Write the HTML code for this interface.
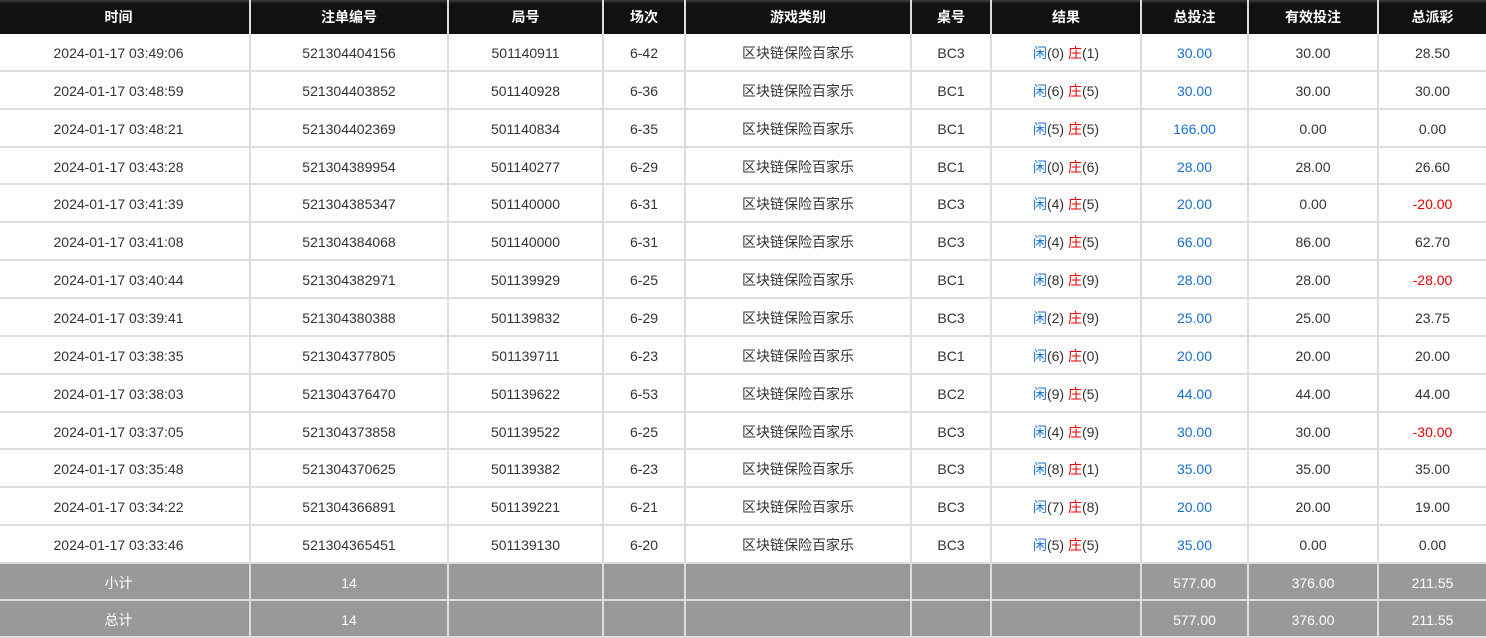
<!DOCTYPE html>
<html><head><meta charset="utf-8"><style>
*{margin:0;padding:0;box-sizing:border-box}
body{width:1486px;height:637px;overflow:hidden;background:#fff;font-family:"Liberation Sans","Noto Sans CJK SC",sans-serif;font-size:14px;color:#333}
.r{display:flex;height:37.86px}
.r div{border-right:2px solid #ddd;border-bottom:2px solid #ddd;display:flex;align-items:center;justify-content:center;white-space:nowrap;padding-top:2px}
.r div:last-child{border-right:none}
.h{height:34px;background:linear-gradient(#3a3a3a 0,#111 4px,#111 100%);color:#fff;font-weight:bold}
.h div{border-color:#ddd;border-bottom:none;padding-top:0}
.s{background:#999;color:#fff;height:37px}
.s div{border-color:#ddd}
.b{color:#1a6fd1}.rd{color:#e00}
.c0{width:251px;padding-right:12px}.c1{width:198px}.c2{width:155px}.c3{width:82px}.c4{width:226px}.c5{width:80px}.c6{width:150px}.c7{width:107px}.c8{width:130px}.c9{width:107px}
</style></head><body>
<div class="r h"><div class="c0">时间</div><div class="c1">注单编号</div><div class="c2">局号</div><div class="c3">场次</div><div class="c4">游戏类别</div><div class="c5">桌号</div><div class="c6">结果</div><div class="c7">总投注</div><div class="c8">有效投注</div><div class="c9">总派彩</div></div>
<div id="rows"></div>
<script>
var d=[
["2024-01-17 03:49:06","521304404156","501140911","6-42","BC3",0,1,"30.00","30.00","28.50"],
["2024-01-17 03:48:59","521304403852","501140928","6-36","BC1",6,5,"30.00","30.00","30.00"],
["2024-01-17 03:48:21","521304402369","501140834","6-35","BC1",5,5,"166.00","0.00","0.00"],
["2024-01-17 03:43:28","521304389954","501140277","6-29","BC1",0,6,"28.00","28.00","26.60"],
["2024-01-17 03:41:39","521304385347","501140000","6-31","BC3",4,5,"20.00","0.00","-20.00"],
["2024-01-17 03:41:08","521304384068","501140000","6-31","BC3",4,5,"66.00","86.00","62.70"],
["2024-01-17 03:40:44","521304382971","501139929","6-25","BC1",8,9,"28.00","28.00","-28.00"],
["2024-01-17 03:39:41","521304380388","501139832","6-29","BC3",2,9,"25.00","25.00","23.75"],
["2024-01-17 03:38:35","521304377805","501139711","6-23","BC1",6,0,"20.00","20.00","20.00"],
["2024-01-17 03:38:03","521304376470","501139622","6-53","BC2",9,5,"44.00","44.00","44.00"],
["2024-01-17 03:37:05","521304373858","501139522","6-25","BC3",4,9,"30.00","30.00","-30.00"],
["2024-01-17 03:35:48","521304370625","501139382","6-23","BC3",8,1,"35.00","35.00","35.00"],
["2024-01-17 03:34:22","521304366891","501139221","6-21","BC3",7,8,"20.00","20.00","19.00"],
["2024-01-17 03:33:46","521304365451","501139130","6-20","BC3",5,5,"35.00","0.00","0.00"]];
var h="";
d.forEach(function(x){h+='<div class="r"><div class="c0">'+x[0]+'</div><div class="c1">'+x[1]+'</div><div class="c2">'+x[2]+'</div><div class="c3">'+x[3]+'</div><div class="c4">区块链保险百家乐</div><div class="c5">'+x[4]+'</div><div class="c6"><span class="b">闲</span>('+x[5]+')&nbsp;<span class="rd">庄</span>('+x[6]+')</div><div class="c7 b">'+x[7]+'</div><div class="c8">'+x[8]+'</div><div class="c9'+(x[9][0]=="-"?" rd":"")+'">'+x[9]+'</div></div>'});
["小计","总计"].forEach(function(t){h+='<div class="r s"><div class="c0">'+t+'</div><div class="c1">14</div><div class="c2"></div><div class="c3"></div><div class="c4"></div><div class="c5"></div><div class="c6"></div><div class="c7">577.00</div><div class="c8">376.00</div><div class="c9">211.55</div></div>'});
document.getElementById("rows").innerHTML=h;
</script>
</body></html>
